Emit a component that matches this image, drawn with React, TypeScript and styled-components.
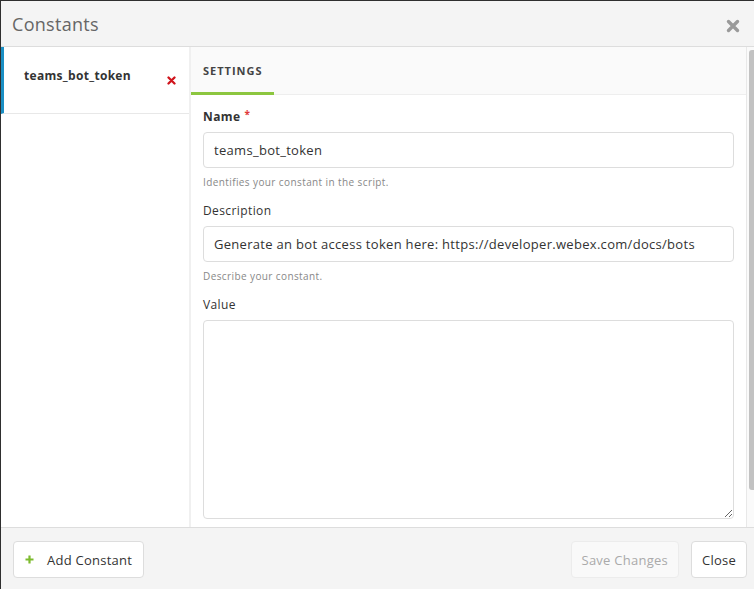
import React from "react";
import styled, { createGlobalStyle } from "styled-components";

const Global = createGlobalStyle`
  html, body { margin: 0; padding: 0; background: #2f2f2f; }
  body { font-family: "Open Sans", "Liberation Sans", sans-serif; color: #333; overflow: hidden; }
  * { box-sizing: border-box; }
`;

const Modal = styled.div`
  margin: 1px 0 0 1px;
  width: 753px;
  height: 588px;
  background: #fff;
  display: flex;
  flex-direction: column;
`;

const Header = styled.div`
  height: 46px;
  flex: none;
  background: #f4f4f4;
  border-bottom: 1px solid #ddd;
  display: flex;
  align-items: center;
  justify-content: space-between;
  padding: 0 14px 0 11px;
`;

const Title = styled.h1`
  margin: 0;
  font-size: 18px;
  font-weight: 400;
  color: #666;
  letter-spacing: 0.3px;
`;

const IconButton = styled.button`
  border: none;
  background: none;
  padding: 0;
  margin-top: 4px;
  display: flex;
  cursor: pointer;
`;

const Body = styled.div`
  flex: 1;
  display: flex;
  min-height: 0;
`;

const Sidebar = styled.div`
  width: 190px;
  flex: none;
  border-right: 2px solid #f0f0f0;
  background: #fff;
`;

const ConstItem = styled.div<{ $active?: boolean }>`
  height: 67px;
  border-bottom: 1px solid #e8e8e8;
  border-left: 3px solid ${(p) => (p.$active ? "#1b8fc4" : "transparent")};
  display: flex;
  align-items: flex-start;
  justify-content: space-between;
  padding: 20px 13px 0 20px;
`;

const ConstName = styled.span`
  font-size: 12px;
  font-weight: 700;
  color: #333;
  line-height: 17px;
  letter-spacing: 0.3px;
`;

const Remove = styled.span`
  display: flex;
  margin-top: 9px;
`;

const Main = styled.div`
  flex: 1;
  display: flex;
  flex-direction: column;
  border-right: 1px solid #e8e8e8;
  min-width: 0;
`;

const Tabs = styled.div`
  height: 48px;
  flex: none;
  background: #fafafa;
  border-bottom: 1px solid #eee;
  display: flex;
`;

const Tab = styled.div<{ $active?: boolean }>`
  padding: 0 11px 0 12px;
  display: flex;
  align-items: center;
  font-size: 11px;
  font-weight: 700;
  letter-spacing: 1px;
  color: #444;
  text-transform: uppercase;
  border-bottom: 3px solid ${(p) => (p.$active ? "#8cc63f" : "transparent")};
  margin-bottom: -1px;
  padding-top: 1px;
`;

const Form = styled.div`
  padding: 13px 12px 8px 12px;
  display: flex;
  flex-direction: column;
  flex: 1;
  min-height: 0;
`;

const Label = styled.label<{ $bold?: boolean }>`
  font-size: 12px;
  line-height: 16px;
  padding-top: 1px;
  font-weight: ${(p) => (p.$bold ? 700 : 400)};
  letter-spacing: 0.4px;
  color: #333;
  margin-bottom: 7px;
`;

const Req = styled.span`
  color: #e03a3a;
  margin-left: 4px;
  font-size: 10px;
  line-height: 10px;
  vertical-align: top;
`;

const Input = styled.input`
  height: 36px;
  width: 100%;
  border: 1px solid #ddd;
  border-radius: 4px;
  padding: 0 10px;
  font-family: inherit;
  font-size: 13px;
  letter-spacing: 0.3px;
  color: #333;
  background: #fff;
  outline: none;
`;

const Help = styled.div`
  font-size: 10px;
  line-height: 14px;
  letter-spacing: 0.4px;
  color: #888;
  margin: 7px 0 13px;
`;

const TextArea = styled.textarea`
  flex: 1;
  width: 100%;
  border: 1px solid #ddd;
  border-radius: 4px;
  padding: 8px 10px;
  font-family: inherit;
  font-size: 13px;
  resize: vertical;
  outline: none;
`;

const Track = styled.div`
  width: 7px;
  flex: none;
  padding: 3px 0 0 2px;
  background: #fafafa;
`;

const Thumb = styled.div`
  width: 5px;
  height: 440px;
  border-radius: 3px 0 0 3px;
  background: #c2c2c2;
`;

const Footer = styled.div`
  height: 62px;
  flex: none;
  background: #f4f4f4;
  border-top: 1px solid #ddd;
  display: flex;
  align-items: flex-start;
  padding: 13px 7px 0 12px;
  gap: 12px;
`;

const Button = styled.button<{ $disabled?: boolean }>`
  height: 37px;
  padding: 0 10px;
  border: 1px solid ${(p) => (p.$disabled ? "#ececec" : "#ddd")};
  border-radius: 4px;
  background: ${(p) => (p.$disabled ? "#f9f9f9" : "#fff")};
  color: ${(p) => (p.$disabled ? "#aaa" : "#333")};
  font-family: inherit;
  font-size: 13px;
  letter-spacing: 0.25px;
  display: flex;
  align-items: center;
  gap: 13px;
  cursor: pointer;
`;

const AddButton = styled(Button)`
  padding: 0 11px;
`;

const Spacer = styled.div`
  flex: 1;
`;

const CloseX = () => (
  <svg width="14" height="14" viewBox="0 0 14 14">
    <path d="M2.5 2.5 L11.5 11.5 M11.5 2.5 L2.5 11.5" stroke="#9a9a9a" strokeWidth="3.4" strokeLinecap="round" />
  </svg>
);

const RedX = () => (
  <svg width="9" height="9" viewBox="0 0 9 9">
    <path d="M1.5 1.5 L7.5 7.5 M7.5 1.5 L1.5 7.5" stroke="#d0141c" strokeWidth="2.3" strokeLinecap="round" />
  </svg>
);

const Plus = () => (
  <svg width="9" height="9" viewBox="0 0 9 9">
    <path d="M4.5 0.5 V8.5 M0.5 4.5 H8.5" stroke="#7dbb2e" strokeWidth="2.2" />
  </svg>
);

export default function App() {
  return (
    <>
      <Global />
      <Modal>
        <Header>
          <Title>Constants</Title>
          <IconButton aria-label="close">
            <CloseX />
          </IconButton>
        </Header>
        <Body>
          <Sidebar>
            <ConstItem $active>
              <ConstName>teams_bot_token</ConstName>
              <Remove>
                <RedX />
              </Remove>
            </ConstItem>
          </Sidebar>
          <Main>
            <Tabs>
              <Tab $active>Settings</Tab>
            </Tabs>
            <Form>
              <Label $bold>
                Name<Req>*</Req>
              </Label>
              <Input defaultValue="teams_bot_token" />
              <Help>Identifies your constant in the script.</Help>
              <Label>Description</Label>
              <Input defaultValue="Generate an bot access token here: https://developer.webex.com/docs/bots" />
              <Help>Describe your constant.</Help>
              <Label>Value</Label>
              <TextArea />
            </Form>
          </Main>
          <Track>
            <Thumb />
          </Track>
        </Body>
        <Footer>
          <AddButton>
            <Plus />
            Add Constant
          </AddButton>
          <Spacer />
          <Button $disabled>Save Changes</Button>
          <Button>Close</Button>
        </Footer>
      </Modal>
    </>
  );
}
